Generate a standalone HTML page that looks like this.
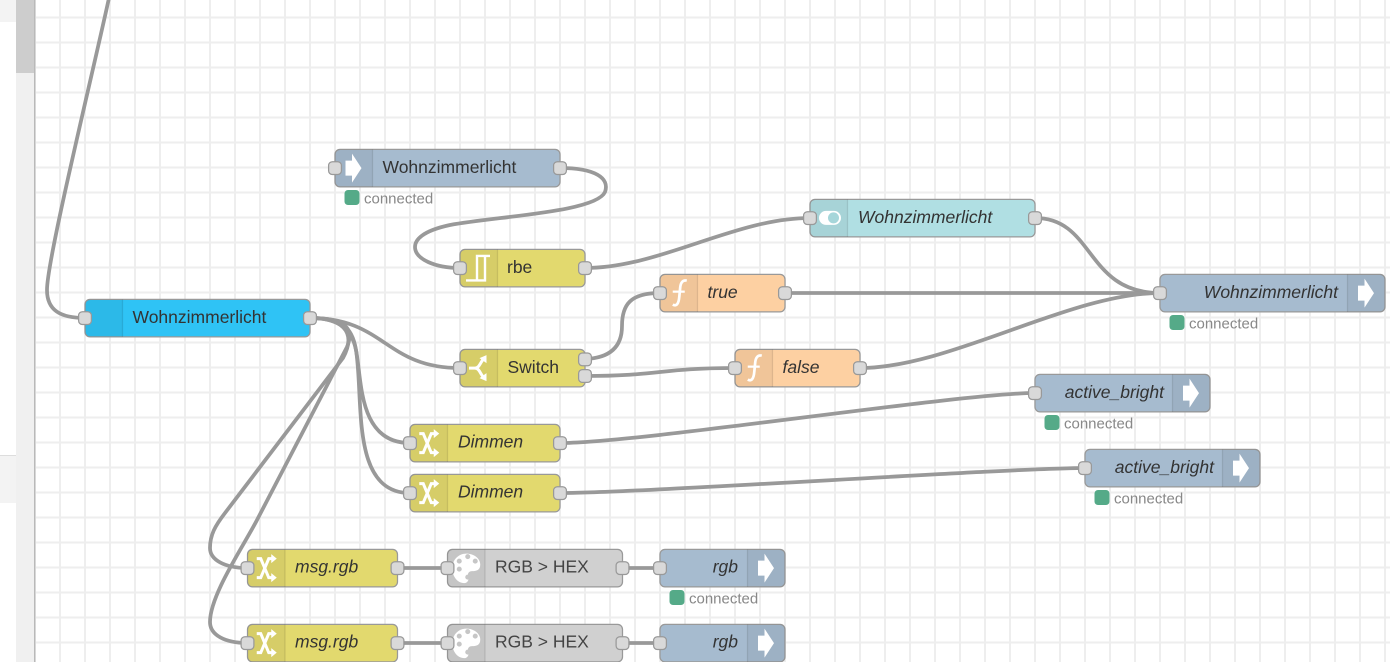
<!DOCTYPE html>
<html><head><meta charset="utf-8"><title>Flow</title>
<style>
html,body{margin:0;padding:0;background:#fff;width:1390px;height:662px;overflow:hidden}
svg{display:block;position:absolute;left:0;top:0}
text{font-family:"Liberation Sans",Arial,sans-serif;font-size:17.5px;fill:#333}
.i{font-style:italic}
.e{text-anchor:end}
.s{font-size:15px;fill:#888}
.w{fill:none;stroke:#999;stroke-width:3.75}
.b{stroke:#999;stroke-width:1.25}
.ic{fill:#000;fill-opacity:.05}
.dv{stroke:#000;stroke-opacity:.1;stroke-width:1.25}
</style></head><body>
<svg width="1390" height="662" viewBox="0 0 1390 662" xmlns="http://www.w3.org/2000/svg">
<defs>
<pattern id="g" width="25" height="25" patternUnits="userSpaceOnUse">
<rect x="9" y="0" width="2" height="25" fill="#eee"/>
<rect x="0" y="16.5" width="25" height="2" fill="#eee"/>
</pattern>
<path id="il" class="ic" d="M5,0H37.5V37.5H5A5,5 0 0 1 0,32.5V5A5,5 0 0 1 5,0Z"/>
<path id="ir" class="ic" d="M0,0H32.5A5,5 0 0 1 37.5,5V32.5A5,5 0 0 1 32.5,37.5H0Z"/>
<rect id="p" x="-6.4" y="-6.4" width="12.8" height="12.8" rx="3.75" fill="#d9d9d9" stroke="#999" stroke-width="1.25"/>
<path id="ar" fill="#fff" d="M-8,-7.5H-1.5V-14.5L8,0L-1.5,14.5V7.5H-8Z"/>
<g id="sh" fill="none" stroke="#fff" stroke-width="3">
<path d="M-9.5,-9.5H-5.5L2.5,9.5H6"/><path d="M-9.5,9.5H-5.5L2.5,-9.5H6"/>
<path fill="#fff" stroke="none" d="M5,-14L10.5,-9.5L5,-5ZM5,5L10.5,9.5L5,14Z"/>
</g>
<g id="fn" fill="none" stroke="#fff" stroke-width="2.7">
<path d="M-6,11.5C-2,13.5 0,10 0.5,4L1.5,-6C2,-11 4.5,-13.5 8,-12.5"/><path d="M-6,-1.5H6" stroke-width="2.2"/>
</g>
<g id="sw" fill="none" stroke="#fff" stroke-width="3">
<path d="M-10,0H-4C0,0 1,-5 4,-8.5"/><path d="M-4,0C0,0 1,5 4,8.5"/>
<path fill="#fff" stroke="none" d="M0.5,-10L7.5,-13V-5ZM0.5,10L7.5,13V5Z"/>
</g>
<g id="pal">
<path fill="#fff" d="M0,-14.5C8,-14.5 14,-9.5 14,-3.5C14,2 10,3 6,3C2,3 1,6 2,9C3,12 1,15 -2,15C-9,15 -14,8 -14,0C-14,-8 -8,-14.5 0,-14.5Z"/>
<g fill="#c6c6c6"><circle cx="-7" cy="-7" r="2.5"/><circle cx="1.5" cy="-11.5" r="2.5"/><circle cx="9" cy="-7" r="2.5"/><circle cx="-7" cy="1" r="2.5"/><circle cx="1.5" cy="9" r="2.5"/></g>
</g>
</defs>

<!-- sidebar -->
<rect x="0" y="0" width="16" height="22" fill="#f3f3f3"/>
<rect x="0" y="455" width="16" height="1" fill="#ddd"/>
<rect x="0" y="456" width="16" height="47" fill="#f3f3f3"/>
<rect x="16" y="0" width="18" height="662" fill="#f0f0f0"/>
<rect x="16" y="0" width="18" height="73" fill="#cdcdcd"/>
<rect x="35" y="0" width="1355" height="662" fill="url(#g)"/>
<rect x="34" y="0" width="1.4" height="662" fill="#b9b9b9"/>

<!-- wires -->
<path class="w" d="M109,-2C90,85 47,260 47,290C47,310 60,318 85,318"/>
<path class="w" d="M560,168C595,168 610,178 605,192C596,212 500,216 450,225C422,231 415,240 415,247C415,259 435,268 460,268"/>
<path class="w" d="M585,268C660,268 735,218 810,218"/>
<path class="w" d="M1035,218C1095,218 1085,293 1160,293"/>
<path class="w" d="M785,293H1160"/>
<path class="w" d="M860,368C950,368 1070,293 1160,293"/>
<path class="w" d="M585,359C612,358 622,345 622,326C622,305 630,293 660,293"/>
<path class="w" d="M585,376C660,376 660,368 735,368"/>
<path class="w" d="M310,318C385,318 385,368 460,368"/>
<path class="w" d="M310,318C340,318 352,330 356,350C362,380 358,443 410,443"/>
<path class="w" d="M310,318C340,318 352,325 356,350C364,400 350,493 410,493"/>
<path class="w" d="M310,318C340,318 358,330 343,358L225,513C215,526 210,535 210,548C210,560 225,568 247,568"/>
<path class="w" d="M310,318C340,318 356,325 347,347L257,520C243,547 210,595 210,622C210,635 225,643 247,643"/>
<path class="w" d="M560,443C640,443 960,393 1035,393"/>
<path class="w" d="M560,493C640,493 1010,468 1085,468"/>
<path class="w" d="M397,568H447"/>
<path class="w" d="M622,568H660"/>
<path class="w" d="M397,643H447"/>
<path class="w" d="M622,643H660"/>

<!-- link in -->
<g transform="translate(335,149.4)">
<rect class="b" width="225" height="37.5" rx="5" fill="#a6bbcf"/><use href="#il"/><path class="dv" d="M37.5,0V37.5"/>
<use href="#ar" x="18.5" y="18.75"/><use href="#p" y="18.75"/><use href="#p" x="225" y="18.75"/>
<text x="47.5" y="23.6">Wohnzimmerlicht</text>
<rect x="9.5" y="40.6" width="15" height="15" rx="3.5" fill="#55aa88"/><text class="s" x="29" y="54">connected</text>
</g>
<!-- rbe -->
<g transform="translate(460,249.4)">
<rect class="b" width="125" height="37.5" rx="5" fill="#e2d96e"/><use href="#il"/><path class="dv" d="M37.5,0V37.5"/>
<path fill="none" stroke="#fff" stroke-width="2.4" d="M6,31H25V6.5H17V31M17,6.5H30"/>
<use href="#p" y="18.75"/><use href="#p" x="125" y="18.75"/>
<text x="47" y="23.6">rbe</text>
</g>
<!-- dashboard switch -->
<g transform="translate(810,199.4)">
<rect class="b" width="225" height="37.5" rx="5" fill="#b0dfe3"/><use href="#il"/><path class="dv" d="M37.5,0V37.5"/>
<rect x="9" y="11.5" width="22" height="14" rx="7" fill="#fff"/><circle cx="23.5" cy="18.5" r="5.5" fill="#a6d6da"/>
<use href="#p" y="18.75"/><use href="#p" x="225" y="18.75"/>
<text class="i" x="48" y="23.6">Wohnzimmerlicht</text>
</g>
<!-- link out -->
<g transform="translate(1160,274.4)">
<rect class="b" width="225" height="37.5" rx="5" fill="#a6bbcf"/><use href="#ir" x="187.5"/><path class="dv" d="M187.5,0V37.5"/>
<use href="#ar" x="206" y="18.75"/><use href="#p" y="18.75"/>
<text class="i e" x="178" y="23.6">Wohnzimmerlicht</text>
<rect x="9.5" y="40.6" width="15" height="15" rx="3.5" fill="#55aa88"/><text class="s" x="29" y="54">connected</text>
</g>
<!-- true -->
<g transform="translate(660,274.4)">
<rect class="b" width="125" height="37.5" rx="5" fill="#fdd0a2"/><use href="#il"/><path class="dv" d="M37.5,0V37.5"/>
<use href="#fn" x="18.75" y="18.75"/><use href="#p" y="18.75"/><use href="#p" x="125" y="18.75"/>
<text class="i" x="47.5" y="23.6">true</text>
</g>
<!-- false -->
<g transform="translate(735,349.4)">
<rect class="b" width="125" height="37.5" rx="5" fill="#fdd0a2"/><use href="#il"/><path class="dv" d="M37.5,0V37.5"/>
<use href="#fn" x="18.75" y="18.75"/><use href="#p" y="18.75"/><use href="#p" x="125" y="18.75"/>
<text class="i" x="47.5" y="23.6">false</text>
</g>
<!-- inject -->
<g transform="translate(85,299.4)">
<rect class="b" width="225" height="37.5" rx="5" fill="#2fc3f5"/><use href="#il"/><path class="dv" d="M37.5,0V37.5"/>
<use href="#p" y="18.75"/><use href="#p" x="225" y="18.75"/>
<text x="47.5" y="23.6">Wohnzimmerlicht</text>
</g>
<!-- switch -->
<g transform="translate(460,349.4)">
<rect class="b" width="125" height="37.5" rx="5" fill="#e2d96e"/><use href="#il"/><path class="dv" d="M37.5,0V37.5"/>
<use href="#sw" x="19" y="18.75"/><use href="#p" y="18.75"/><use href="#p" x="125" y="10"/><use href="#p" x="125" y="26.6"/>
<text x="47.5" y="23.6">Switch</text>
</g>
<!-- active_bright -->
<g transform="translate(1035,374.4)">
<rect class="b" width="175" height="37.5" rx="5" fill="#a6bbcf"/><use href="#ir" x="137.5"/><path class="dv" d="M137.5,0V37.5"/>
<use href="#ar" x="156" y="18.75"/><use href="#p" y="18.75"/>
<text class="i e" x="129" y="23.6">active_bright</text>
<rect x="9.5" y="40.6" width="15" height="15" rx="3.5" fill="#55aa88"/><text class="s" x="29" y="54">connected</text>
</g>
<g transform="translate(1085,449.4)">
<rect class="b" width="175" height="37.5" rx="5" fill="#a6bbcf"/><use href="#ir" x="137.5"/><path class="dv" d="M137.5,0V37.5"/>
<use href="#ar" x="156" y="18.75"/><use href="#p" y="18.75"/>
<text class="i e" x="129" y="23.6">active_bright</text>
<rect x="9.5" y="40.6" width="15" height="15" rx="3.5" fill="#55aa88"/><text class="s" x="29" y="54">connected</text>
</g>
<!-- Dimmen -->
<g transform="translate(410,424.4)">
<rect class="b" width="150" height="37.5" rx="5" fill="#e2d96e"/><use href="#il"/><path class="dv" d="M37.5,0V37.5"/>
<use href="#sh" x="18.75" y="18.75"/><use href="#p" y="18.75"/><use href="#p" x="150" y="18.75"/>
<text class="i" x="48" y="23.2">Dimmen</text>
</g>
<g transform="translate(410,474.4)">
<rect class="b" width="150" height="37.5" rx="5" fill="#e2d96e"/><use href="#il"/><path class="dv" d="M37.5,0V37.5"/>
<use href="#sh" x="18.75" y="18.75"/><use href="#p" y="18.75"/><use href="#p" x="150" y="18.75"/>
<text class="i" x="48" y="23.2">Dimmen</text>
</g>
<!-- row 1 -->
<g transform="translate(247.5,549.4)">
<rect class="b" width="150" height="37.5" rx="5" fill="#e2d96e"/><use href="#il"/><path class="dv" d="M37.5,0V37.5"/>
<use href="#sh" x="18.75" y="18.75"/><use href="#p" y="18.75"/><use href="#p" x="150" y="18.75"/>
<text class="i" x="47.5" y="23.2">msg.rgb</text>
</g>
<g transform="translate(447.5,549.4)">
<rect class="b" width="175" height="37.5" rx="5" fill="#d0d0d0"/><use href="#il"/><path class="dv" d="M37.5,0V37.5"/>
<use href="#pal" x="18.75" y="18.75"/><use href="#p" y="18.75"/><use href="#p" x="175" y="18.75"/>
<text x="47.5" y="23.2" style="fill:#444">RGB &gt; HEX</text>
</g>
<g transform="translate(660,549.4)">
<rect class="b" width="125" height="37.5" rx="5" fill="#a6bbcf"/><use href="#ir" x="87.5"/><path class="dv" d="M87.5,0V37.5"/>
<use href="#ar" x="106" y="18.75"/><use href="#p" y="18.75"/>
<text class="i e" x="78" y="23.2">rgb</text>
<rect x="9.5" y="40.6" width="15" height="15" rx="3.5" fill="#55aa88"/><text class="s" x="29" y="54">connected</text>
</g>
<!-- row 2 -->
<g transform="translate(247.5,624.4)">
<rect class="b" width="150" height="37.5" rx="5" fill="#e2d96e"/><use href="#il"/><path class="dv" d="M37.5,0V37.5"/>
<use href="#sh" x="18.75" y="18.75"/><use href="#p" y="18.75"/><use href="#p" x="150" y="18.75"/>
<text class="i" x="47.5" y="23.2">msg.rgb</text>
</g>
<g transform="translate(447.5,624.4)">
<rect class="b" width="175" height="37.5" rx="5" fill="#d0d0d0"/><use href="#il"/><path class="dv" d="M37.5,0V37.5"/>
<use href="#pal" x="18.75" y="18.75"/><use href="#p" y="18.75"/><use href="#p" x="175" y="18.75"/>
<text x="47.5" y="23.2" style="fill:#444">RGB &gt; HEX</text>
</g>
<g transform="translate(660,624.4)">
<rect class="b" width="125" height="37.5" rx="5" fill="#a6bbcf"/><use href="#ir" x="87.5"/><path class="dv" d="M87.5,0V37.5"/>
<use href="#ar" x="106" y="18.75"/><use href="#p" y="18.75"/>
<text class="i e" x="78" y="23.2">rgb</text>
</g>
</svg>
</body></html>
